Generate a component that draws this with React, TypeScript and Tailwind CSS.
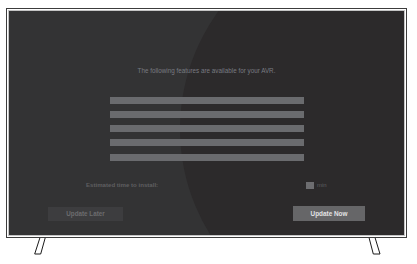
import React from "react";

const bars = ["mt-0", "mt-[7px]", "mt-[7px]", "mt-[7px]", "mt-[8px]"];

export default function App() {
  return (
    <div className="w-[417px] h-[264px] bg-white overflow-hidden" style={{ fontFamily: '"Liberation Sans", Arial, sans-serif' }}>
      <div className="pt-[8px] pl-[6px]">
        {/* tv frame */}
        <div className="w-[401px] h-[230px] border border-[#3c3c3c] bg-white p-px">
          <div className="w-full h-full border border-[#c4c4c4] bg-[#333334]">
            <div className="relative w-full h-full overflow-hidden">
              {/* darker arc on the right */}
              <div className="absolute left-[171px] top-[-82px] w-[400px] h-[400px] rounded-full bg-[#2c2a2b]" />

              <div className="relative flex flex-col h-full">
                <p className="mt-[56px] text-center text-[6.3px] leading-[8px] text-[#797b82]">
                  The following features are available for your AVR.
                </p>

                <div className="mt-[22px] flex flex-col items-center">
                  {bars.map((m, i) => (
                    <div key={i} className={`${m} w-[194px] h-[7px] bg-[#6a6b6e]`} />
                  ))}
                </div>

                <div className="mt-[20px] flex items-center h-[8px]">
                  <span className="ml-[77px] w-[220px] text-[6.1px] font-bold text-[#5f5f61]">Estimated time to install:</span>
                  <span className="w-[8px] h-[7px] bg-[#6d6d70]" />
                  <span className="ml-[3px] text-[6px] text-[#5f5f61]">min</span>
                </div>

                <div className="mt-[17px] flex items-start">
                  <button className="ml-[39px] mt-px w-[75px] h-[14px] bg-[#3d3d3f] text-[6.3px] font-bold text-[#6c6c6e]">
                    Update Later
                  </button>
                  <button className="ml-[170px] w-[72px] h-[15px] bg-[#666668] text-[6.4px] font-bold text-[#e2e2e4]">
                    Update Now
                  </button>
                </div>
              </div>
            </div>
          </div>
        </div>
      </div>

      {/* legs */}
      <svg width="417" height="18" viewBox="0 238 417 18" className="block">
        <polygon points="40,237.5 45.3,237.5 40.7,254 34.7,254" fill="white" stroke="#1a1a1a" strokeWidth="1" />
        <polygon points="369,237.5 375,237.5 380,254 373.3,254" fill="white" stroke="#1a1a1a" strokeWidth="1" />
      </svg>
    </div>
  );
}
